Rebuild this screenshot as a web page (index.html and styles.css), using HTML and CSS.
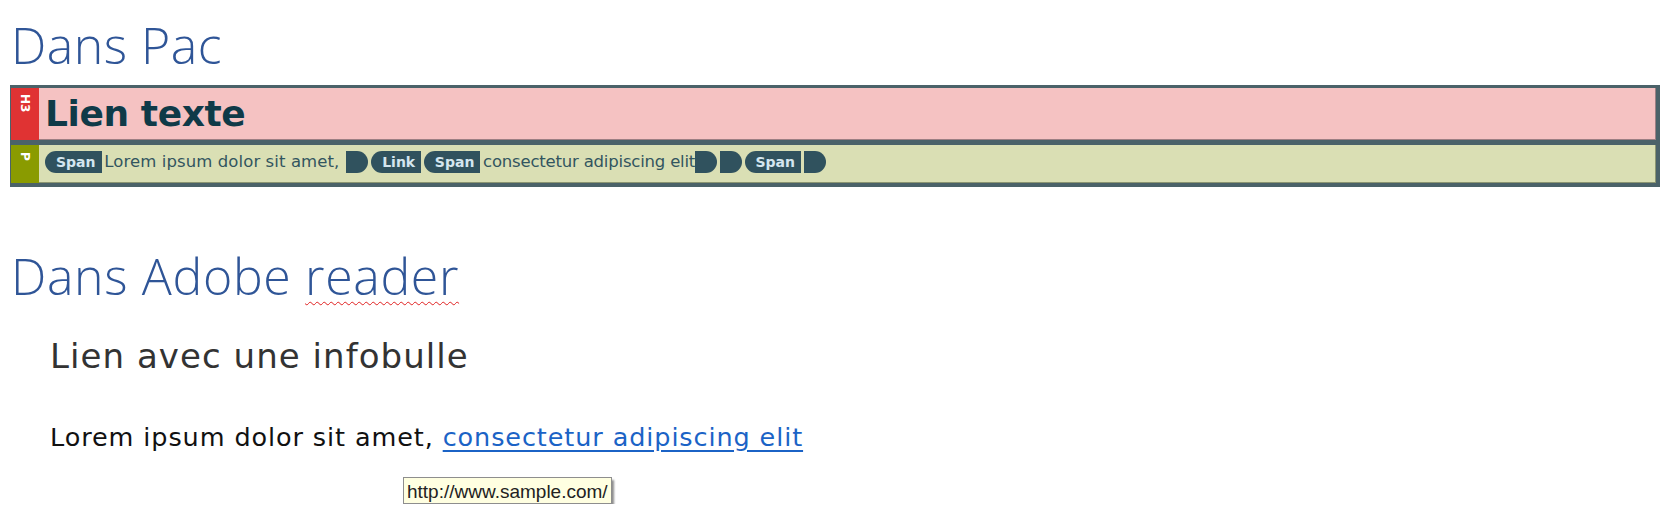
FILE: index.html
```html
<!DOCTYPE html>
<html lang="fr">
<head>
<meta charset="utf-8">
<title>Lien avec infobulle</title>
<link rel="stylesheet" href="styles.css">
</head>
<body>
  <h1 class="doc-title title-pac">Dans Pac</h1>

  <div class="pac-tree">
    <div class="pac-row row-h3">
      <div class="tag tag-h3"><span class="tag-text">H3</span></div>
      <div class="row-body body-h3">Lien texte</div>
    </div>
    <div class="pac-row row-p">
      <div class="tag tag-p"><span class="tag-text">P</span></div>
      <div class="row-body body-p">
        <span class="pill open">Span</span>
        <span class="run run-1">Lorem ipsum dolor sit amet,</span>
        <span class="pill close"></span>
        <span class="pill open">Link</span>
        <span class="pill open">Span</span>
        <span class="run run-2">consectetur adipiscing elit</span>
        <span class="pill close"></span>
        <span class="pill close"></span>
        <span class="pill open">Span</span>
        <span class="pill close"></span>
      </div>
    </div>
  </div>

  <h1 class="doc-title title-adobe">Dans Adobe <span class="misspelled">reader</span></h1>

  <div class="reader">
    <h3 class="reader-heading">Lien avec une infobulle</h3>
    <p class="reader-text">Lorem ipsum dolor sit amet, <a class="reader-link" href="#">consectetur adipiscing elit</a></p>
    <div class="tooltip">http://www.sample.com/</div>
  </div>
</body>
</html>
```
FILE: styles.css
```css
html, body {
  margin: 0;
  padding: 0;
  background: #ffffff;
}

body {
  padding-top: 20px;
  font-family: "DejaVu Sans", Verdana, sans-serif;
}

.doc-title {
  margin: 0 0 0 11px;
  font-family: "Open Sans", "Noto Sans", sans-serif;
  font-weight: 300;
  font-size: 50px;
  line-height: 50px;
  color: #2f5597;
  letter-spacing: 0.5px;
}

.title-adobe {
  letter-spacing: 0.65px;
}

.misspelled {
  text-decoration: underline wavy #e02020;
  text-decoration-thickness: 1px;
  text-underline-offset: 6px;
  text-decoration-skip-ink: none;
}

/* PAC tree */
.pac-tree {
  margin: 15px 2px 0 10px;
  background: #4b6269;
  padding: 2.5px 4px 4px 1px;
  display: flex;
  flex-direction: column;
  gap: 5px;
}

.pac-row {
  display: flex;
  box-sizing: border-box;
}

.row-h3 {
  height: 52.5px;
  background: #f5c2c2;
  box-shadow: inset 0 -1px 0 #9c7f83, inset -1px 0 0 #9c7f83;
}

.row-p {
  height: 38px;
  background: #dadfb4;
  box-shadow: inset 0 -1px 0 #8c9672, inset -1px 0 0 #8c9672;
}

.tag {
  width: 28px;
  flex: none;
  display: flex;
  justify-content: center;
}

.tag-h3 {
  background: #e03333;
  padding-top: 6px;
}

.tag-p {
  background: #8a9b00;
  padding-top: 7px;
}

.tag-text {
  writing-mode: vertical-rl;
  color: #ffffff;
  font-family: "DejaVu Sans", sans-serif;
  font-weight: bold;
  font-size: 12px;
  line-height: 12px;
}

.row-body {
  flex: 1;
  display: flex;
  align-items: center;
}

.body-h3 {
  padding-left: 6px;
  font-weight: bold;
  font-size: 36px;
  letter-spacing: -0.4px;
  color: #0f3a48;
}

.body-p {
  align-items: flex-start;
  padding: 5.5px 0 0 6px;
  font-size: 16.5px;
  color: #32555f;
}

.pill {
  height: 22px;
  flex: none;
  background: #30525e;
  margin-right: 2.7px;
  box-sizing: border-box;
}

.pill.open {
  border-radius: 11px 0 0 11px;
  padding: 0 6px 0 11px;
  color: #d4e6ef;
  font-weight: bold;
  font-size: 14px;
  line-height: 22px;
}

.pill.close {
  width: 22px;
  border-radius: 0 11px 11px 0;
}

.run {
  line-height: 22px;
  white-space: pre;
}

.run-1 {
  margin-right: 7px;
  letter-spacing: 0.1px;
}

.run-2 {
  letter-spacing: -0.2px;
}

/* Adobe reader */
.title-adobe {
  margin-top: 64px;
}

.reader {
  padding-left: 50px;
  color: #2a2a2a;
}

.reader-heading {
  margin: 38px 0 0 0;
  font-weight: normal;
  font-size: 34px;
  line-height: 34px;
  letter-spacing: 1.05px;
  color: #333333;
}

.reader-text {
  margin: 52px 0 0 0;
  font-size: 25.5px;
  line-height: 25.5px;
  letter-spacing: 0.9px;
  color: #111111;
}

.reader-link {
  color: #1b63c6;
  text-decoration: underline;
  text-underline-offset: 4px;
}

.tooltip {
  display: inline-block;
  margin: 26px 0 0 353px;
  padding: 4px 3px 2px 3px;
  background: #ffffe1;
  border: 1px solid #8e8e8e;
  box-shadow: 2px 3px 2px rgba(0, 0, 0, 0.45);
  font-family: "Liberation Sans", Arial, sans-serif;
  font-size: 19px;
  line-height: 19px;
  color: #222222;
}
```
